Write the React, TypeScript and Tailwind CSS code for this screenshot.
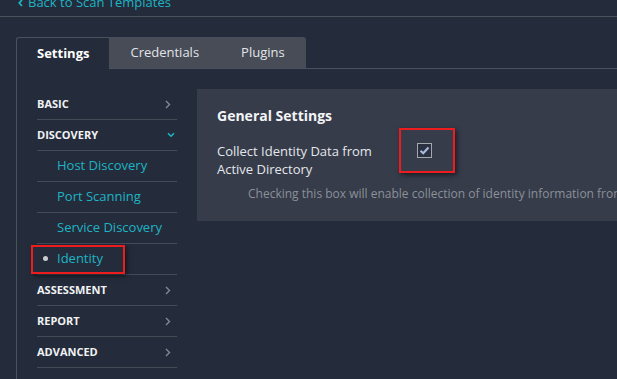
const font = { fontFamily: '"Open Sans", "Noto Sans", sans-serif' };

type Item = { label: string; kind: "head" | "sub"; open?: boolean; active?: boolean };

const items: Item[] = [
  { label: "BASIC", kind: "head" },
  { label: "DISCOVERY", kind: "head", open: true },
  { label: "Host Discovery", kind: "sub" },
  { label: "Port Scanning", kind: "sub" },
  { label: "Service Discovery", kind: "sub" },
  { label: "Identity", kind: "sub", active: true },
  { label: "ASSESSMENT", kind: "head" },
  { label: "REPORT", kind: "head" },
  { label: "ADVANCED", kind: "head" },
];

function ChevronRight() {
  return (
    <svg width="6" height="9" viewBox="0 0 6 9" className="mr-[6px]">
      <path d="M1 1 L4.5 4.5 L1 8" fill="none" stroke="#7e889e" strokeWidth="1.4" />
    </svg>
  );
}

function ChevronDown() {
  return (
    <svg width="8" height="6" viewBox="0 0 8 6" className="mr-[2px]">
      <path d="M1 1.2 L4 4.2 L7 1.2" fill="none" stroke="#1fb3c4" strokeWidth="1.6" />
    </svg>
  );
}

function SideMenu() {
  return (
    <div className="w-[140px] shrink-0">
      {items.map((it) => (
        <div
          key={it.label}
          className="relative flex h-[31px] items-center justify-between border-b border-[#454b57]"
        >
          {it.kind === "head" ? (
            <span className="text-[11px] font-bold text-[#f1f2f4]">{it.label}</span>
          ) : (
            <span className="pl-[20px] text-[13px] text-[#1fb3c4]">{it.label}</span>
          )}
          {it.kind === "head" && (it.open ? <ChevronDown /> : <ChevronRight />)}
          {it.active && (
            <>
              <span className="absolute left-[6px] top-[12px] h-[5px] w-[5px] rounded-full bg-[#c9cbcf]" />
              <span className="absolute left-[-6px] top-[1px] h-[29px] w-[94px] border-2 border-[#ec1c1f] shadow-[2px_2px_5px_rgba(0,0,0,0.55)]" />
            </>
          )}
        </div>
      ))}
    </div>
  );
}

function Checkbox() {
  return (
    <div className="relative h-[15px] w-[15px]">
      <div className="flex h-[15px] w-[15px] items-center justify-center border border-[#a3a7ae] bg-[#2b3140]">
        <svg width="11" height="9" viewBox="0 0 11 9">
          <path d="M1.5 4.8 L4.2 7.2 L9.5 1.6" fill="none" stroke="#aab8dc" strokeWidth="2.2" />
        </svg>
      </div>
      <span className="absolute left-[-18px] top-[-15px] h-[45px] w-[56px] border-2 border-[#ec1c1f] shadow-[2px_2px_5px_rgba(0,0,0,0.55)]" />
    </div>
  );
}

export default function App() {
  return (
    <div className="h-[379px] w-[617px] overflow-hidden bg-[#242c3b]" style={font}>
      {/* back link, cut off at the top of the window */}
      <div className="flex h-[17px] flex-col border-b border-[#4b515d] pl-[18px]">
        <div className="mt-[-7px] flex items-center text-[13px] leading-[18px] text-[#1fb3c4]">
          <svg width="5" height="8" viewBox="0 0 5 8" className="mr-[5px] mt-[1px]">
            <path d="M4 1 L1.3 4 L4 7" fill="none" stroke="#1fb3c4" strokeWidth="1.8" />
          </svg>
          Back to Scan Templates
        </div>
      </div>

      <div className="pl-[16px] pt-[20px]">
        {/* tabs */}
        <div className="flex h-[32px]">
          <div className="flex h-[32px] items-center rounded-tl-[3px] border-l border-t border-[#4b515d] px-[20px] text-[13px] font-bold text-white">
            Settings
          </div>
          <div className="flex h-[32px] rounded-tr-[3px] border-b border-[#4b515d] bg-[#474c57] text-[13px] text-[#e2e4e8]">
            <div className="flex items-center px-[21px]">Credentials</div>
            <div className="flex items-center px-[21px]">Plugins</div>
          </div>
          <div className="flex-1 border-b border-[#4b515d]" />
        </div>

        {/* body */}
        <div className="flex h-[400px] gap-[20px] border-l border-[#4b515d] pl-[20px] pt-[20px]">
          <SideMenu />
          <div className="h-[132px] min-w-0 flex-1 overflow-hidden bg-[#363c4a] pl-[20px] pt-[17px]">
            <div className="text-[14px] font-bold leading-[20px] text-[#f3f4f6]">General Settings</div>
            <div className="mt-[17px] flex">
              <div className="w-[200px] shrink-0 text-[13px] leading-[17.5px] text-[#e4e6ea]">
                Collect Identity Data from
                <br />
                Active Directory
              </div>
              <Checkbox />
            </div>
            <div className="mt-[7px] whitespace-nowrap pl-[31px] text-[12px] leading-[17px] text-[#8b9099]">
              Checking this box will enable collection of identity information from Active Directory
            </div>
          </div>
        </div>
      </div>
    </div>
  );
}
